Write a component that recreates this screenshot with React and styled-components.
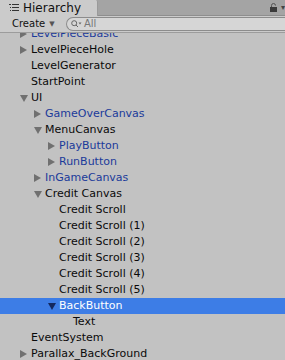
import React from 'react';
import styled, { createGlobalStyle } from 'styled-components';

const GlobalStyle = createGlobalStyle`
  html, body {
    margin: 0;
    padding: 0;
    background: #c2c2c2;
  }
  body {
    font-family: "DejaVu Sans", "Liberation Sans", sans-serif;
  }
`;

const Window = styled.div`
  width: 285px;
  height: 360px;
  display: flex;
  flex-direction: column;
  background: #c2c2c2;
  overflow: hidden;
`;

const TabStrip = styled.div`
  height: 16px;
  flex-shrink: 0;
  display: flex;
  align-items: stretch;
  background: #a4a4a4;
  border-bottom: 1px solid #8e8e8e;
  box-sizing: border-box;
`;

const Tab = styled.div`
  width: 98px;
  display: flex;
  align-items: center;
  gap: 4px;
  padding-left: 9px;
  box-sizing: border-box;
  background: #cbcbcb;
  border-right: 1px solid #9a9a9a;
  border-top-right-radius: 2px;
  font-size: 12px;
  line-height: 15px;
  color: #111;
  margin-bottom: -1px;
`;

const TabTools = styled.div`
  margin-left: auto;
  display: flex;
  align-items: center;
  gap: 4px;
  color: #444;
  font-size: 8px;
`;

const Toolbar = styled.div`
  height: 17px;
  flex-shrink: 0;
  display: flex;
  align-items: center;
  background: #cbcbcb;
  border-bottom: 1px solid #9c9c9c;
  box-sizing: border-box;
`;

const CreateButton = styled.div`
  display: flex;
  align-items: center;
  gap: 4px;
  padding-left: 12px;
  width: 66px;
  box-sizing: border-box;
  font-size: 10px;
  line-height: 14px;
  color: #111;
`;

const Caret = styled.span`
  font-size: 7px;
  color: #555;
`;

const SearchField = styled.div`
  flex: 1;
  height: 14px;
  display: flex;
  align-items: center;
  gap: 2px;
  padding-left: 4px;
  background: #d6d6d6;
  border: 1px solid #8c8c8c;
  border-right: none;
  border-radius: 7px 0 0 7px;
  box-sizing: border-box;
  font-size: 10px;
  line-height: 12px;
  color: #777;
`;

const List = styled.div`
  flex: 1;
  overflow: hidden;
`;

/* list is scrolled a few pixels down, so the first row is half hidden */
const ListInner = styled.div`
  margin-top: -7px;
`;

const Row = styled.div`
  height: 16px;
  display: flex;
  align-items: center;
  padding-left: ${({ $depth }) => 18 + $depth * 14}px;
  background: ${({ $selected }) => ($selected ? '#3d7de6' : 'transparent')};
  font-size: 11px;
  line-height: 16px;
  white-space: nowrap;
  color: ${({ $selected, $prefab }) =>
    $selected ? '#ffffff' : $prefab ? '#1b3a9a' : '#0a0a0a'};
`;

const Fold = styled.span`
  width: 13px;
  height: 16px;
  display: flex;
  align-items: center;
  justify-content: flex-start;
  padding-left: 2px;
  box-sizing: border-box;
  flex-shrink: 0;
`;

const Arrow = ({ open, selected }) => {
  const fill = selected ? '#14285e' : '#707070';
  return open ? (
    <svg width="8" height="7" viewBox="0 0 8 7">
      <polygon points="0,0 8,0 4,7" fill={fill} />
    </svg>
  ) : (
    <svg width="7" height="8" viewBox="0 0 7 8">
      <polygon points="0,0 7,4 0,8" fill={fill} />
    </svg>
  );
};

const HierarchyIcon = () => (
  <svg width="10" height="8" viewBox="0 0 10 8">
    <rect x="0" y="0" width="2" height="1" fill="#333" />
    <rect x="3" y="0" width="7" height="1" fill="#333" />
    <rect x="1" y="3" width="1" height="1" fill="#333" />
    <rect x="3" y="3" width="7" height="1" fill="#333" />
    <rect x="1" y="6" width="1" height="1" fill="#333" />
    <rect x="3" y="6" width="7" height="1" fill="#333" />
  </svg>
);

const LockIcon = () => (
  <svg width="7" height="9" viewBox="0 0 7 9">
    <path d="M1.5 4 V2.5 A2 2 0 0 1 5.5 2.5" stroke="#555" strokeWidth="1" fill="none" />
    <rect x="0" y="4" width="7" height="5" fill="#3a3a3a" />
  </svg>
);

const SearchIcon = () => (
  <svg width="11" height="8" viewBox="0 0 11 8">
    <circle cx="3.2" cy="3.2" r="2.5" stroke="#666" strokeWidth="1" fill="none" />
    <line x1="5" y1="5" x2="7" y2="7" stroke="#666" strokeWidth="1" />
    <polygon points="7.5,2.5 10.5,2.5 9,4.5" fill="#666" />
  </svg>
);

const items = [
  { name: 'LevelPieceBasic', depth: 0, fold: 'closed', prefab: true },
  { name: 'LevelPieceHole', depth: 0, fold: 'closed' },
  { name: 'LevelGenerator', depth: 0 },
  { name: 'StartPoint', depth: 0 },
  { name: 'UI', depth: 0, fold: 'open' },
  { name: 'GameOverCanvas', depth: 1, fold: 'closed', prefab: true },
  { name: 'MenuCanvas', depth: 1, fold: 'open' },
  { name: 'PlayButton', depth: 2, fold: 'closed', prefab: true },
  { name: 'RunButton', depth: 2, fold: 'closed', prefab: true },
  { name: 'InGameCanvas', depth: 1, fold: 'closed', prefab: true },
  { name: 'Credit Canvas', depth: 1, fold: 'open' },
  { name: 'Credit Scroll', depth: 2 },
  { name: 'Credit Scroll (1)', depth: 2 },
  { name: 'Credit Scroll (2)', depth: 2 },
  { name: 'Credit Scroll (3)', depth: 2 },
  { name: 'Credit Scroll (4)', depth: 2 },
  { name: 'Credit Scroll (5)', depth: 2 },
  { name: 'BackButton', depth: 2, fold: 'open', selected: true },
  { name: 'Text', depth: 3 },
  { name: 'EventSystem', depth: 0 },
  { name: 'Parallax_BackGround', depth: 0, fold: 'closed' },
];

const App = () => (
  <>
    <GlobalStyle />
    <Window>
      <TabStrip>
        <Tab>
          <HierarchyIcon />
          Hierarchy
        </Tab>
        <TabTools>
          <LockIcon />
          <span>▾</span>
        </TabTools>
      </TabStrip>

      <Toolbar>
        <CreateButton>
          Create <Caret>▼</Caret>
        </CreateButton>
        <SearchField>
          <SearchIcon />
          All
        </SearchField>
      </Toolbar>

      <List>
        <ListInner>
          {items.map((item) => (
            <Row
              key={item.name}
              $depth={item.depth}
              $prefab={item.prefab}
              $selected={item.selected}
            >
              <Fold>
                {item.fold && <Arrow open={item.fold === 'open'} selected={item.selected} />}
              </Fold>
              {item.name}
            </Row>
          ))}
        </ListInner>
      </List>
    </Window>
  </>
);

export default App;
